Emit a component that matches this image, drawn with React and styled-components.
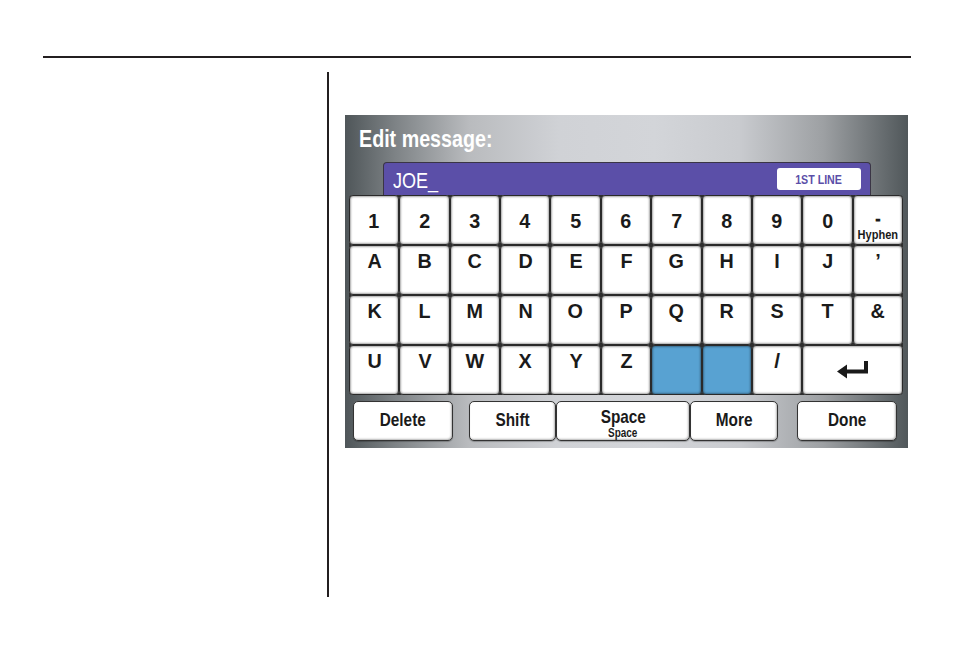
import React from 'react';
import styled, { createGlobalStyle } from 'styled-components';

const GlobalStyle = createGlobalStyle`
  html, body {
    margin: 0;
    padding: 0;
    background: #ffffff;
  }
  body {
    font-family: "Liberation Sans", Arial, sans-serif;
  }
`;

const Page = styled.div`
  width: 954px;
  height: 652px;
  padding-top: 56px;
  box-sizing: border-box;
`;

const HeaderRule = styled.div`
  height: 2px;
  margin: 0 43px;
  background: #231f20;
`;

const Body = styled.div`
  display: flex;
  margin-top: 14px;
`;

const Sidebar = styled.div`
  width: 327px;
  height: 525px;
  border-right: 2px solid #231f20;
`;

const Content = styled.div`
  padding: 43px 0 0 16px;
`;

/* the screen font is a condensed sans, so wide labels get squeezed */
const Narrow = styled.span`
  display: inline-block;
  white-space: nowrap;
  transform: scaleX(${({ $sx }) => $sx || 0.83});
  transform-origin: ${({ $origin }) => $origin || 'center'};
`;

const Screen = styled.div`
  width: 563px;
  height: 333px;
  box-sizing: border-box;
  display: flex;
  flex-direction: column;
  background: linear-gradient(
    90deg,
    #4f5659 0%,
    #7e8386 9%,
    #b9bbbe 22%,
    #d0d2d6 38%,
    #d3d5d9 55%,
    #c9cbcf 70%,
    #9da0a3 85%,
    #50575a 100%
  );
`;

const Title = styled.div`
  margin: 12px 0 0 14px;
  font-size: 24px;
  line-height: 24px;
  font-weight: bold;
  color: #ffffff;
`;

const InputBar = styled.div`
  margin: 11px 0 0 38px;
  width: 488px;
  height: 33px;
  box-sizing: border-box;
  display: flex;
  align-items: center;
  justify-content: space-between;
  padding: 0 9px 0 9px;
  background: #5b4fa8;
  border: 1px solid #3a3545;
  border-bottom: none;
  border-radius: 4px 4px 0 0;
`;

const InputText = styled.span`
  margin-top: 4px;
  font-size: 22px;
  line-height: 22px;
  color: #ffffff;
`;

const LineTag = styled.span`
  width: 84px;
  height: 22px;
  display: flex;
  align-items: center;
  justify-content: center;
  background: #ffffff;
  border-radius: 3px;
  color: #5b4fa8;
  font-size: 13px;
  font-weight: bold;
`;

const Keys = styled.div`
  margin-left: 4px;
  width: 554px;
  display: grid;
  grid-template-columns: repeat(11, 1fr);
  grid-auto-rows: 50px;
  background: #2e2e2e;
  border-radius: 4px;
`;

const Key = styled.div`
  grid-column: span ${({ $span }) => $span || 1};
  box-sizing: border-box;
  display: flex;
  flex-direction: column;
  align-items: center;
  justify-content: ${({ $center }) => ($center ? 'center' : 'flex-start')};
  padding-top: ${({ $center, $pad }) => ($center ? 0 : $pad || 4)}px;
  background: ${({ $blue }) => ($blue ? '#58a2d2' : '#ffffff')};
  border: 1px solid #2a2a2a;
  border-radius: 4px;
  box-shadow: inset 0 0 2px 1px rgba(0, 0, 0, 0.35);
  color: #1a1a1a;
  font-size: 21px;
  line-height: 21px;
  font-weight: bold;
`;

const Dash = styled.span`
  display: block;
  font-size: 13px;
  line-height: 16px;
  -webkit-text-stroke: 1.2px #1a1a1a;
`;

const SubLabel = styled.span`
  font-size: 13px;
  line-height: 13px;
`;

const Controls = styled.div`
  display: flex;
  margin: 6px 0 0 8px;
  height: 40px;
`;

const Button = styled.div`
  width: ${({ $w }) => $w}px;
  margin-left: ${({ $gap }) => $gap || 0}px;
  box-sizing: border-box;
  display: flex;
  flex-direction: column;
  align-items: center;
  justify-content: center;
  padding: ${({ $twoLine }) => ($twoLine ? '4px 0 0' : '0 0 3px')};
  background: #ffffff;
  border: 1px solid #333333;
  border-radius: 5px;
  box-shadow: inset -1px -1px 2px rgba(0, 0, 0, 0.3), 0 1px 1px rgba(0, 0, 0, 0.25);
  color: #1a1a1a;
  font-size: 18.5px;
  line-height: ${({ $twoLine }) => ($twoLine ? 20 : 18)}px;
  font-weight: bold;
`;

const SmallLine = styled.span`
  font-size: 12px;
  line-height: 12px;
`;

const ReturnIcon = () => (
  <svg width="32" height="18" viewBox="0 0 32 18">
    <path d="M0 10.5 L10 3.5 V8.5 H27 V0 H31 V12.5 H10 V17.5 Z" fill="#1a1a1a" />
  </svg>
);

const digits = ['1', '2', '3', '4', '5', '6', '7', '8', '9', '0'];
const rowA = ['A', 'B', 'C', 'D', 'E', 'F', 'G', 'H', 'I', 'J', '\u2019'];
const rowK = ['K', 'L', 'M', 'N', 'O', 'P', 'Q', 'R', 'S', 'T', '&'];
const rowU = ['U', 'V', 'W', 'X', 'Y', 'Z'];

export default function App() {
  return (
    <Page>
      <GlobalStyle />
      <HeaderRule />
      <Body>
        <Sidebar />
        <Content>
          <Screen>
            <Title>
              <Narrow $sx={0.82} $origin="left">Edit message:</Narrow>
            </Title>
            <InputBar>
              <InputText>
                <Narrow $sx={0.82} $origin="left">JOE_</Narrow>
              </InputText>
              <LineTag>
                <Narrow $sx={0.82}>1ST LINE</Narrow>
              </LineTag>
            </InputBar>
            <Keys>
              {digits.map((d) => (
                <Key key={d} $center>
                  <Narrow $sx={0.94}>{d}</Narrow>
                </Key>
              ))}
              <Key $pad={16}>
                <Dash>-</Dash>
                <SubLabel>
                  <Narrow $sx={0.85}>Hyphen</Narrow>
                </SubLabel>
              </Key>
              {[...rowA, ...rowK, ...rowU].map((k) => (
                <Key key={k}>
                  <Narrow $sx={0.94}>{k}</Narrow>
                </Key>
              ))}
              <Key $blue />
              <Key $blue />
              <Key>/</Key>
              <Key $span={2} $center>
                <ReturnIcon />
              </Key>
            </Keys>
            <Controls>
              <Button $w={100}>
                <Narrow>Delete</Narrow>
              </Button>
              <Button $w={87} $gap={16}>
                <Narrow>Shift</Narrow>
              </Button>
              <Button $w={134} $twoLine>
                <Narrow>Space</Narrow>
                <SmallLine>
                  <Narrow>Space</Narrow>
                </SmallLine>
              </Button>
              <Button $w={88}>
                <Narrow>More</Narrow>
              </Button>
              <Button $w={100} $gap={19}>
                <Narrow>Done</Narrow>
              </Button>
            </Controls>
          </Screen>
        </Content>
      </Body>
    </Page>
  );
}
